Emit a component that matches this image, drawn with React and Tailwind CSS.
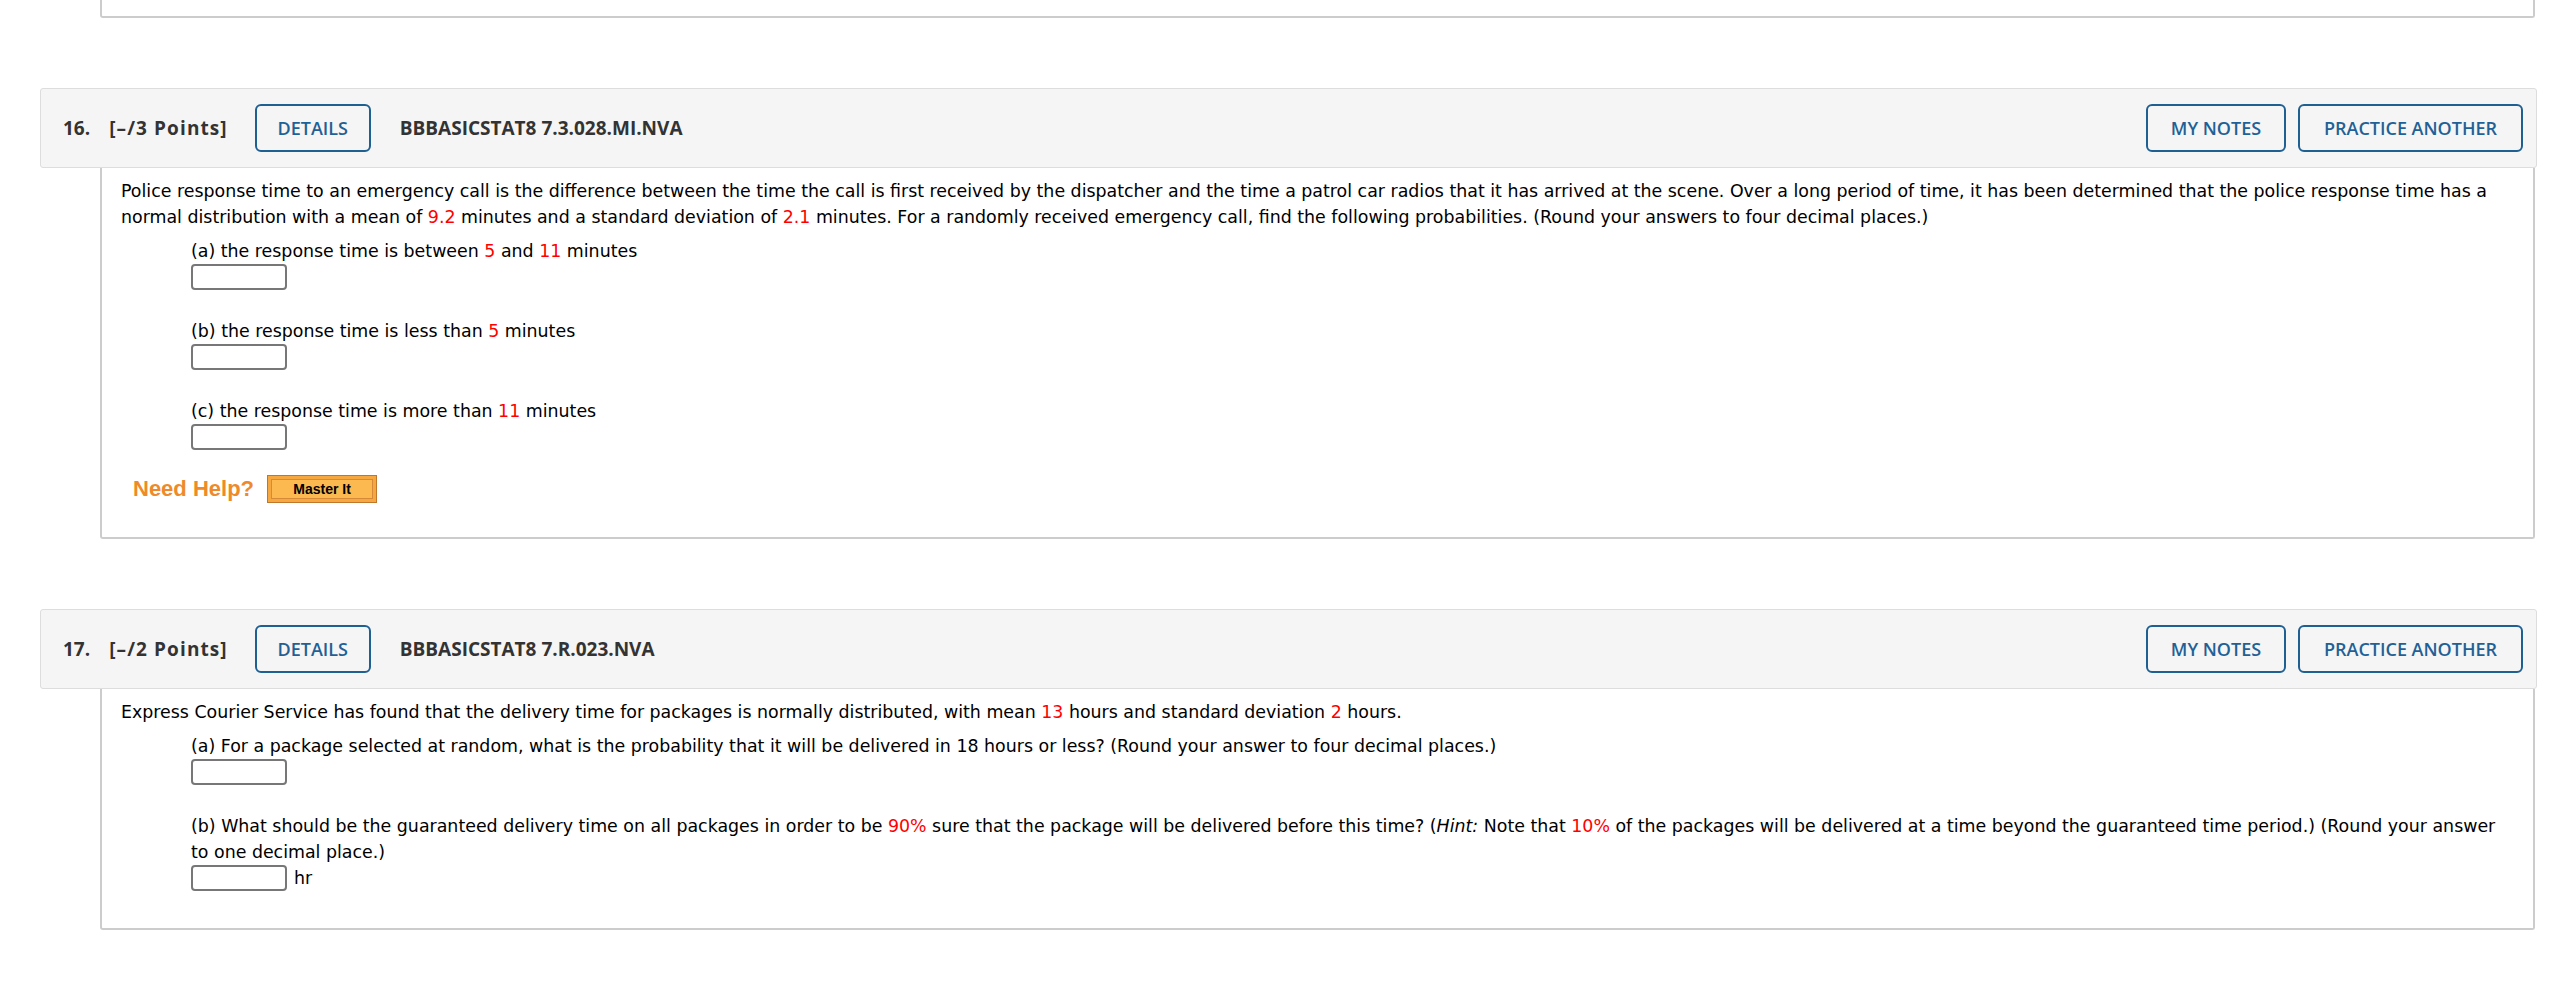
import React from 'react';

const Red = ({ children }) => <span className="text-[#ff0000]">{children}</span>;

const questions = [
  {
    number: '16.',
    points: '[–/3 Points]',
    code: 'BBBASICSTAT8 7.3.028.MI.NVA',
    intro: (
      <>
        Police response time to an emergency call is the difference between the time the call is first received by the
        dispatcher and the time a patrol car radios that it has arrived at the scene. Over a long period of time, it has
        been determined that the police response time has a normal distribution with a mean of <Red>9.2</Red> minutes
        and a standard deviation of <Red>2.1</Red> minutes. For a randomly received emergency call, find the following
        probabilities. (Round your answers to four decimal places.)
      </>
    ),
    parts: [
      { label: <>(a) the response time is between <Red>5</Red> and <Red>11</Red> minutes</> },
      { label: <>(b) the response time is less than <Red>5</Red> minutes</> },
      { label: <>(c) the response time is more than <Red>11</Red> minutes</> },
    ],
    help: true,
  },
  {
    number: '17.',
    points: '[–/2 Points]',
    code: 'BBBASICSTAT8 7.R.023.NVA',
    intro: (
      <>
        Express Courier Service has found that the delivery time for packages is normally distributed, with mean{' '}
        <Red>13</Red> hours and standard deviation <Red>2</Red> hours.
      </>
    ),
    parts: [
      {
        label: (
          <>
            (a) For a package selected at random, what is the probability that it will be delivered in 18 hours or less?
            (Round your answer to four decimal places.)
          </>
        ),
      },
      {
        label: (
          <>
            (b) What should be the guaranteed delivery time on all packages in order to be <Red>90%</Red> sure that the
            package will be delivered before this time? (<i>Hint:</i> Note that <Red>10%</Red> of the packages will be
            delivered at a time beyond the guaranteed time period.) (Round your answer to one decimal place.)
          </>
        ),
        unit: 'hr',
      },
    ],
    help: false,
  },
];

function HeaderButton({ children, className }) {
  return (
    <button
      className={`h-[48px] rounded-[6px] border-2 border-[#1f6093] bg-transparent text-[18px] font-semibold text-[#1f6196] ${className}`}
    >
      {children}
    </button>
  );
}

function Question({ q }) {
  return (
    <div className="mt-[70px]">
      <div className="flex h-[80px] items-center rounded-[3px] border border-[#dddddd] bg-[#f5f5f5] pl-[22px] pr-[13px] font-['Open_Sans',sans-serif] text-[#333333]">
        <span className="text-[19px] font-bold">{q.number}</span>
        <span className="ml-[19px] text-[19px] font-bold tracking-[1.1px]">{q.points}</span>
        <HeaderButton className="ml-[27px] w-[116px]">DETAILS</HeaderButton>
        <span className="ml-[29px] text-[19px] font-bold">{q.code}</span>
        <div className="ml-auto flex gap-[12px]">
          <HeaderButton className="w-[140px]">MY NOTES</HeaderButton>
          <HeaderButton className="w-[225px]">PRACTICE ANOTHER</HeaderButton>
        </div>
      </div>

      <div
        className={`ml-[60px] mr-[2px] rounded-b-[3px] border-2 border-t-0 border-[#cccccc] pl-[19px] pr-[22px] pt-[10px] font-['DejaVu_Sans',Verdana,sans-serif] text-[17.4px] leading-[26px] text-black ${
          q.help ? 'pb-[34px]' : 'pb-[37px]'
        }`}
      >
        <p>{q.intro}</p>

        {q.parts.map((part, i) => (
          <div key={i} className={`pl-[70px] ${i === 0 ? 'mt-[8px]' : 'mt-[28px]'}`}>
            <div>{part.label}</div>
            <div className="flex items-center gap-[7px]">
              <input className="block h-[26px] w-[96px] rounded-[4px] border-2 border-[#777777] bg-white" />
              {part.unit && <span>{part.unit}</span>}
            </div>
          </div>
        ))}

        {q.help && (
          <div className="ml-[12px] mt-[25px] flex items-center gap-[13px]">
            <span className="font-['Liberation_Sans',Arial,sans-serif] text-[22px] font-bold leading-[28px] text-[#ee8a2a]">
              Need Help?
            </span>
            <div className="h-[28px] w-[110px] border border-[#bf772c] bg-[#f7a740] p-[3px]">
              <div className="flex h-full items-center justify-center border border-[#d48a38] bg-[#fbb94f] font-['Liberation_Sans',Arial,sans-serif] text-[14px] font-bold leading-none text-black">
                Master It
              </div>
            </div>
          </div>
        )}
      </div>
    </div>
  );
}

export default function App() {
  return (
    <div className="min-h-screen bg-white pl-[40px] pr-[23px]">
      <div className="ml-[60px] mr-[2px] h-[18px] rounded-b-[3px] border-2 border-t-0 border-[#cccccc]" />
      {questions.map((q) => (
        <Question key={q.number} q={q} />
      ))}
    </div>
  );
}
